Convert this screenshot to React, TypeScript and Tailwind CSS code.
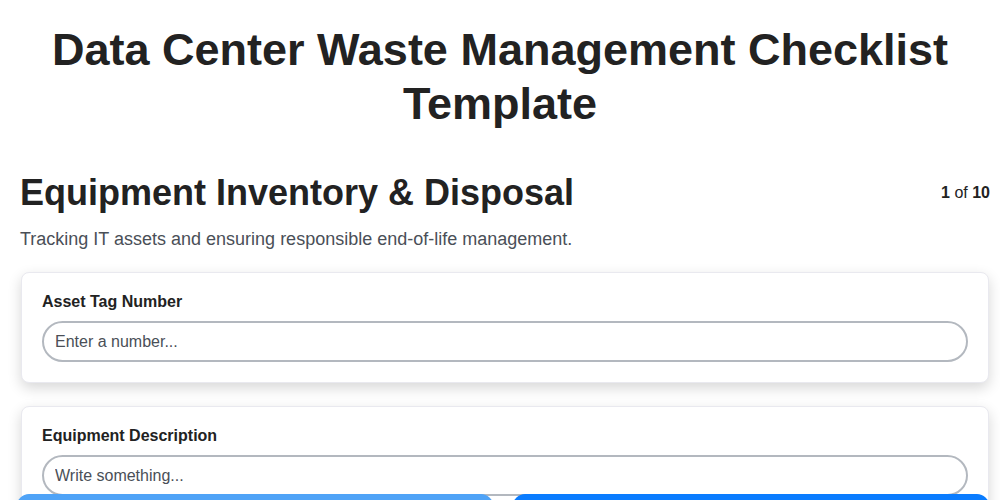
import React from "react";

export default function App() {
  return (
    <div className="min-h-screen bg-white text-[#222] font-['Liberation_Sans',Arial,sans-serif]">
      <h1 className="pt-[23px] px-[40px] text-center text-[45px] leading-[54px] font-bold text-[#222]">
        Data Center Waste Management Checklist Template
      </h1>
      <div className="pl-[21px] pr-[10px] pt-[40px]">
        <div className="flex items-center justify-between">
          <h2 className="text-[36px] leading-[43px] font-bold text-[#222] -ml-px">
            Equipment Inventory &amp; Disposal
          </h2>
          <div className="text-[16px] leading-6 text-[#222]">
            <span className="font-bold">1</span> of <span className="font-bold">10</span>
          </div>
        </div>
        <p className="mt-[12px] text-[18px] leading-[27px] text-[#4a4f57] -ml-px">
          Tracking IT assets and ensuring responsible end-of-life management.
        </p>
        <div className="mt-[19px] mr-px flex flex-col gap-[23px]">
          <Card label="Asset Tag Number" placeholder="Enter a number..." />
          <Card label="Equipment Description" placeholder="Write something..." />
        </div>
      </div>
      <div className="fixed left-[17px] right-[11px] top-[494px] flex gap-5">
        <button aria-label="Previous" className="flex-1 h-12 rounded-xl bg-[#4fa3f7]" />
        <button aria-label="Next" className="flex-1 h-12 rounded-xl bg-[#0a7cff]" />
      </div>
    </div>
  );
}

function Card({ label, placeholder }: { label: string; placeholder: string }) {
  return (
    <div className="rounded-lg border border-[#e9e9ef] bg-white px-5 pt-[19px] pb-5 shadow-[0_5px_14px_rgba(0,0,0,0.16)]">
      <label className="block text-[16px] leading-5 font-bold text-[#222]">{label}</label>
      <input
        className="mt-[9px] block w-full h-[41px] rounded-full border-2 border-[#b3b8bf] px-[11px] text-[16px] text-[#222] placeholder:text-[#4a4f57] outline-none font-['Liberation_Sans',Arial,sans-serif]"
        placeholder={placeholder}
      />
    </div>
  );
}
